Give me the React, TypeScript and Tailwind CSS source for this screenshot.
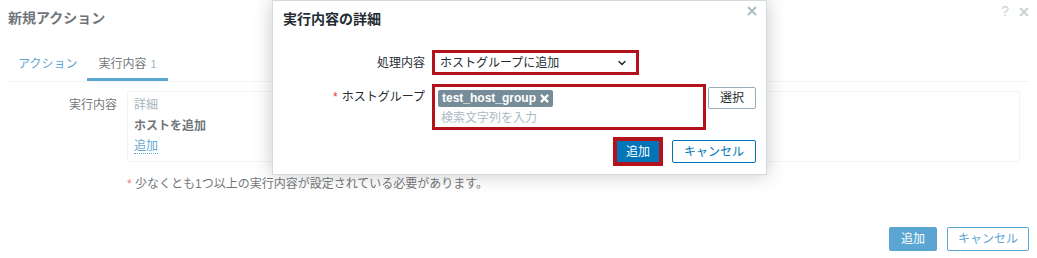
import { ChevronDown } from 'lucide-react';

const FONT = { fontFamily: '"Liberation Sans", "Noto Sans CJK JP", sans-serif' };

function XIcon({ className, width = 2 }: { className?: string; width?: number }) {
  return (
    <svg viewBox="0 0 10 10" className={className} fill="none" stroke="currentColor" strokeWidth={width}>
      <path d="M1 1 L9 9 M9 1 L1 9" />
    </svg>
  );
}

// Background form (the "新規アクション" dialog behind the popup)
function ActionForm() {
  return (
    <div className="flex flex-col h-full text-[12px] text-[#1f2c33]">
      {/* Header */}
      <div className="flex items-center justify-between h-[37px] pl-[8px] pr-[8px]">
        <h4 className="text-[14px] font-bold">新規アクション</h4>
        <div className="flex items-center gap-[10px] text-[#acbbc2] -mt-[14px]">
          <span className="text-[14px]">?</span>
          <XIcon className="w-[10px] h-[10px]" />
        </div>
      </div>

      {/* Tabs */}
      <div className="mx-[8px] mt-[13px] flex border-b border-[#ebeef0]">
        <div className="h-[31px] px-[10px] flex items-center border-b-[3px] border-transparent text-[#0275b8]">
          アクション
        </div>
        <div className="h-[31px] px-[11px] flex items-center border-b-[3px] border-[#0275b8]">
          実行内容<span className="ml-[4px] text-[#768d99] text-[11px]">1</span>
        </div>
      </div>

      {/* Operations row */}
      <div className="flex mt-[9px] pl-[8px] pr-[17px]">
        <div className="w-[109px] text-right pt-[5px]">実行内容</div>
        <div className="ml-[10px] flex-1 h-[71px] border border-[#ebeef0] pl-[6px] pt-[2px]">
          <div className="h-[21px] flex items-center text-[#768d99]">詳細</div>
          <div className="h-[21px] flex items-center font-bold">ホストを追加</div>
          <div className="h-[21px] flex items-center">
            <span className="text-[#0275b8] border-b border-dotted border-[#0275b8] leading-[14px]">追加</span>
          </div>
        </div>
      </div>

      <div className="mt-[15px] pl-[127px] leading-[14px]">
        <span className="text-[#e33734]">*</span> 少なくとも1つ以上の実行内容が設定されている必要があります。
      </div>

      {/* Footer */}
      <div className="mt-auto flex justify-end gap-[10px] pr-[8px] pb-[7px]">
        <button className="w-[48px] h-[24px] rounded-[2px] bg-[#0275b8] text-white">追加</button>
        <button className="w-[82px] h-[24px] rounded-[2px] border border-[#0275b8] bg-white text-[#0275b8]">
          キャンセル
        </button>
      </div>
    </div>
  );
}

// Popup dialog "実行内容の詳細"
function OperationDialog() {
  return (
    <div className="absolute left-[272px] top-0 w-[495px] h-[175px] bg-white border border-[#d3dbdf] shadow-[0_0_18px_rgba(0,0,0,0.22)] text-[12px] text-[#1f2c33]">
      <div className="relative h-[36px] pl-[10px] flex items-center">
        <h4 className="text-[14px] font-bold">実行内容の詳細</h4>
        <XIcon className="absolute right-[9px] top-[5px] w-[10px] h-[10px] text-[#acbbc2]" />
      </div>

      <div className="pt-[13px] pl-[10px] pr-[10px]">
        {/* 処理内容 */}
        <div className="flex">
          <div className="w-[142px] h-[25px] flex items-center justify-end">処理内容</div>
          <div className="ml-[7px] w-[207px] h-[25px] border-[3px] border-[#b3121c] bg-white flex items-center justify-between pl-[5px] pr-[8px]">
            <span>ホストグループに追加</span>
            <ChevronDown className="w-[12px] h-[12px]" strokeWidth={3} />
          </div>
        </div>

        {/* ホストグループ */}
        <div className="flex mt-[9px]">
          <div className="w-[142px] h-[26px] flex items-center justify-end">
            <span className="text-[#e33734] mr-[4px]">*</span>ホストグループ
          </div>
          <div className="ml-[7px] w-[274px] h-[46px] border-[3px] border-[#b3121c] bg-white pl-[3px] pt-[2px]">
            <div className="inline-flex items-center h-[17px] px-[4px] rounded-[2px] bg-[#768d99] text-white font-bold">
              test_host_group
              <XIcon className="ml-[4px] w-[9px] h-[9px]" width={2.5} />
            </div>
            <div className="mt-[3px] pl-[3px] leading-[16px] text-[#acbbc2]">検索文字列を入力</div>
          </div>
          <button className="ml-[2px] mt-[3px] w-[48px] h-[22px] rounded-[2px] border border-[#99abb5] bg-white">
            選択
          </button>
        </div>

        {/* Footer */}
        <div className="flex justify-end items-center mt-[7px]">
          <div className="w-[50px] h-[29px] border-[4px] border-[#b3121c] bg-[#0275b8] text-white flex items-center justify-center">
            追加
          </div>
          <button className="ml-[9px] w-[84px] h-[23px] rounded-[2px] border border-[#0275b8] bg-white text-[#0275b8]">
            キャンセル
          </button>
        </div>
      </div>
    </div>
  );
}

export default function App() {
  return (
    <div className="relative w-[1037px] h-[258px] bg-white overflow-hidden" style={FONT}>
      <ActionForm />
      {/* dimming overlay over the background dialog */}
      <div className="absolute inset-0 bg-white/35" />
      <OperationDialog />
    </div>
  );
}
